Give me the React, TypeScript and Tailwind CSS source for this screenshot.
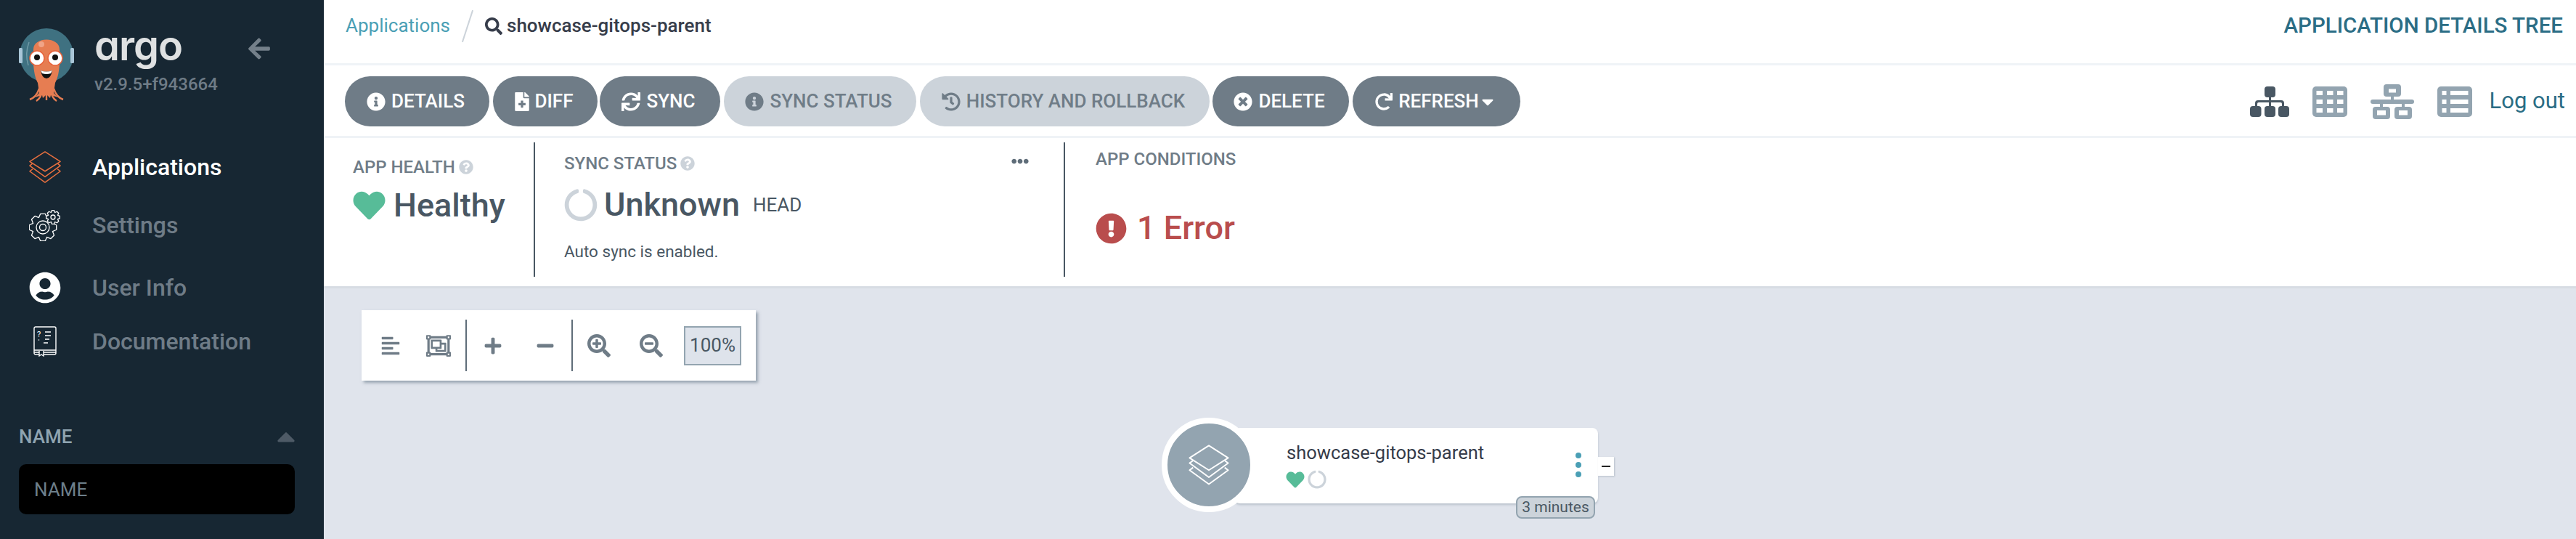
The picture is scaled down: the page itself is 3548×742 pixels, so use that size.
import type { ReactNode } from "react";
import {
  FaAlignLeft,
  FaArrowLeft,
  FaCaretDown,
  FaCaretUp,
  FaCircleNotch,
  FaEllipsisH,
  FaExclamationCircle,
  FaFileMedical,
  FaHeart,
  FaHistory,
  FaInfoCircle,
  FaMinus,
  FaPlus,
  FaQuestionCircle,
  FaRedo,
  FaRegObjectGroup,
  FaSearch,
  FaSearchMinus,
  FaSearchPlus,
  FaSync,
  FaTimesCircle,
  FaUserCircle,
} from "react-icons/fa";

function ArgoLogo() {
  return (
    <svg viewBox="0 0 80 102" className="h-[102px] w-[80px] shrink-0">
      <circle cx="38" cy="38" r="37" fill="#3f7181" />
      <path d="M14 20 Q8 36 13 52" fill="none" stroke="#6f9aa6" strokeWidth="1.5" />
      <rect x="0" y="28" width="5" height="21" rx="1.5" fill="#a9c6d8" />
      <rect x="71" y="28" width="5" height="21" rx="1.5" fill="#a9c6d8" />
      <path
        d="M20 30 C20 12 56 12 56 30 L56 50 C55 66 52 72 50 76 L48 90 L54 96 L44 93 L43 97 L38 92 L33 97 L32 93 L22 96 L28 90 L26 76 C24 72 21 66 20 50 Z"
        fill="#e67d52"
      />
      <path d="M15 99 Q24 96 28 84 M61 99 Q52 96 48 84 M24 101 Q31 97 33 84 M52 101 Q45 97 43 84 M38 84 L38 100" stroke="#e67d52" strokeWidth="2.4" fill="none" />
      <circle cx="31" cy="23" r="4" fill="#f0a487" />
      <circle cx="25" cy="42" r="10" fill="#fff" stroke="#e8623a" strokeWidth="1.5" />
      <circle cx="50" cy="42" r="10" fill="#fff" stroke="#e8623a" strokeWidth="1.5" />
      <circle cx="25" cy="41" r="4" fill="#111" />
      <circle cx="50" cy="41" r="4" fill="#111" />
      <path d="M30 59 Q38 62 46 59 Q44 70 38 70 Q32 70 30 59 Z" fill="#111" />
      <path d="M30 59 Q38 62 46 59 L44 63 Q38 65 32 63 Z" fill="#fff" />
    </svg>
  );
}

function LayersIcon({ className, stroke }: { className: string; stroke: string }) {
  return (
    <svg viewBox="0 0 48 48" fill="none" stroke={stroke} strokeWidth="1.6" strokeLinejoin="round" className={className}>
      <path d="M24 2 L46 16 L24 30 L2 16 Z" />
      <path d="M6 19 L2 22 L24 38 L46 22 L42 19" />
      <path d="M6 27 L2 30 L24 46 L46 30 L42 27" />
    </svg>
  );
}

function gearPath(cx: number, cy: number, outer: number, inner: number, teeth: number) {
  const points: string[] = [];
  for (let i = 0; i < teeth; i++) {
    const step = (Math.PI * 2) / teeth;
    const a = i * step;
    const pairs: [number, number][] = [
      [inner, a - step * 0.5],
      [outer, a - step * 0.22],
      [outer, a + step * 0.22],
    ];
    for (const [r, t] of pairs) {
      points.push(`${(cx + r * Math.cos(t)).toFixed(2)} ${(cy + r * Math.sin(t)).toFixed(2)}`);
    }
  }
  return `M${points.join(" L")} Z`;
}

function SettingsIcon() {
  return (
    <svg viewBox="0 0 44 44" fill="none" stroke="#fff" strokeWidth="1.3" strokeLinejoin="round" className="h-[44px] w-[44px]">
      <path d={gearPath(19, 25, 19, 14.5, 8)} />
      <circle cx="19" cy="25" r="9" />
      <circle cx="19" cy="25" r="4.5" />
      <path d={gearPath(33, 11, 9.5, 7, 8)} fill="#172733" />
      <circle cx="33" cy="11" r="3" />
    </svg>
  );
}

function DocsIcon() {
  return (
    <svg viewBox="0 0 32 42" fill="none" stroke="#fff" strokeWidth="1.4" className="h-[42px] w-[32px]">
      <rect x="1" y="1" width="30" height="38" rx="2" />
      <path d="M1 33 H31 M1 36 H31" />
      <path d="M8 34 V41 L11 39 L14 41 V34" fill="#172733" />
      <path d="M16 8 H24 M16 13 H24 M16 18 H22 M14 23 H20" />
      <text x="5" y="15" fill="#fff" stroke="none" fontSize="11" fontFamily="Roboto, sans-serif">?</text>
      <circle cx="7.5" cy="19" r="0.8" fill="#fff" stroke="none" />
    </svg>
  );
}

function TreeViewIcon() {
  return (
    <svg viewBox="0 0 54 42" className="h-[42px] w-[54px] fill-[#495763]">
      <rect x="20" y="0" width="15" height="15" rx="4" />
      <rect x="26" y="14" width="3" height="14" />
      <path d="M7 28 V23 Q7 19 11 19 H43 Q47 19 47 23 V28 H44 V24 Q44 22 42 22 H12 Q10 22 10 24 V28 Z" />
      <rect x="0" y="27" width="15.5" height="15" rx="4" />
      <rect x="20" y="27" width="15" height="15" rx="4" />
      <rect x="39" y="27" width="15" height="15" rx="4" />
    </svg>
  );
}

function GridViewIcon() {
  const cols = [5.5, 20, 34];
  const rows = [6, 18, 30];
  return (
    <svg viewBox="0 0 48 42" className="ml-[32px] h-[42px] w-[48px]">
      <rect width="48" height="42" rx="5" fill="#93a4b0" />
      {rows.map((y) => cols.map((x) => <rect key={`${x}-${y}`} x={x} y={y} width="8.5" height="6" fill="#fff" />))}
    </svg>
  );
}

function NetworkViewIcon() {
  return (
    <svg viewBox="0 0 60 48" className="ml-[32px] h-[48px] w-[60px] fill-[#93a4b0]">
      <path fillRule="evenodd" d="M22 0 H38 Q42 0 42 4 V13 Q42 17 38 17 H22 Q18 17 18 13 V4 Q18 0 22 0 Z M25 6.5 V11.5 H35 V6.5 Z" />
      <rect x="28" y="16" width="4" height="6" />
      <rect x="0" y="21" width="60" height="6" rx="3" />
      <rect x="13" y="26" width="4" height="6" />
      <rect x="43" y="26" width="4" height="6" />
      <path fillRule="evenodd" d="M7 31 H23 Q27 31 27 35 V44 Q27 48 23 48 H7 Q3 48 3 44 V35 Q3 31 7 31 Z M9 36 V42.5 H21 V36 Z" />
      <path fillRule="evenodd" d="M37 31 H53 Q57 31 57 35 V44 Q57 48 53 48 H37 Q33 48 33 44 V35 Q33 31 37 31 Z M39 36 V42.5 H51 V36 Z" />
    </svg>
  );
}

function ListViewIcon() {
  const rows = [6, 18, 30];
  return (
    <svg viewBox="0 0 48 42" className="ml-[32px] h-[42px] w-[48px]">
      <rect width="48" height="42" rx="5" fill="#93a4b0" />
      {rows.map((y) => (
        <g key={y} fill="#fff">
          <rect x="6.5" y={y} width="6" height="6" />
          <rect x="18" y={y} width="24.5" height="6" />
        </g>
      ))}
    </svg>
  );
}

function NavItem({ icon, label, active, className }: { icon: ReactNode; label: string; active?: boolean; className: string }) {
  return (
    <div className={`flex h-[50px] items-center ${className}`}>
      <div className="flex w-[127px] justify-center pr-[3px] pl-[0px]">{icon}</div>
      <span className={`text-[32px] font-medium ${active ? "text-white" : "text-[#6f7c87]"}`}>{label}</span>
    </div>
  );
}

function Sidebar() {
  return (
    <aside className="flex h-full w-[446px] shrink-0 flex-col bg-[#172733]">
      <div className="flex items-start pt-[38px] pl-[26px]">
        <ArgoLogo />
        <div className="ml-[24px] flex w-[180px] flex-col">
          <span className="mt-[-10px] h-[70px] font-['Inter'] text-[56px] leading-[70px] font-semibold tracking-[-1px] text-[#dfe1e2] [font-feature-settings:'cv11']">
            argo
          </span>
          <span className="mt-[3px] text-[24px] leading-[30px] font-medium whitespace-nowrap text-[#6f7c87]">v2.9.5+f943664</span>
        </div>
        <FaArrowLeft className="mt-[12px] ml-[30px] h-[34px] w-[34px] text-[#74808a]" />
      </div>
      <nav className="mt-[65px] flex flex-col">
        <NavItem icon={<LayersIcon className="h-[46px] w-[46px]" stroke="#e8703f" />} label="Applications" active className="" />
        <NavItem icon={<SettingsIcon />} label="Settings" className="mt-[30px]" />
        <NavItem icon={<FaUserCircle className="h-[44px] w-[44px] text-white" />} label="User Info" className="mt-[36px]" />
        <NavItem icon={<DocsIcon />} label="Documentation" className="mt-[24px]" />
      </nav>
      <div className="mt-[86px] flex items-center justify-between pr-[36px] pl-[26px]">
        <span className="text-[26px] leading-[32px] font-medium text-[#8fa4b1]">NAME</span>
        <FaCaretUp className="h-[40px] w-[32px] text-[#4e5a66]" />
      </div>
      <div className="mt-[18px] mr-[40px] ml-[26px]">
        <input
          placeholder="NAME"
          className="h-[69px] w-full rounded-[10px] bg-black px-[21px] text-[26px] text-white outline-none placeholder:text-[#6d7f8b]"
        />
      </div>
    </aside>
  );
}

function PillButton({ icon, label, disabled, className }: { icon: ReactNode; label: ReactNode; disabled?: boolean; className: string }) {
  return (
    <button
      className={`flex h-[69px] shrink-0 items-center justify-center gap-[8px] rounded-[35px] pr-[4px] text-[26px] font-medium ${
        disabled ? "bg-[#ccd3da] text-[#6f7c87]" : "bg-[#6f7c87] text-white"
      } ${className}`}
    >
      {icon}
      {label}
    </button>
  );
}

function Toolbar() {
  const iconClass = "h-[26px] w-[26px]";
  return (
    <div className="flex h-[100px] items-center justify-between border-b-[3px] border-[#eff3f7] pt-[2px] pr-[15px] pl-[29px]">
      <div className="flex">
        <PillButton icon={<FaInfoCircle className={iconClass} />} label="DETAILS" className="w-[199px]" />
        <PillButton icon={<FaFileMedical className="h-[26px] w-[20px]" />} label="DIFF" className="ml-[5px] w-[144px]" />
        <PillButton icon={<FaSync className={iconClass} />} label="SYNC" className="ml-[3px] w-[166px]" />
        <PillButton icon={<FaInfoCircle className={iconClass} />} label="SYNC STATUS" disabled className="ml-[5px] w-[265px]" />
        <PillButton icon={<FaHistory className={iconClass} />} label="HISTORY AND ROLLBACK" disabled className="ml-[5px] w-[399px]" />
        <PillButton icon={<FaTimesCircle className={iconClass} />} label="DELETE" className="ml-[4px] w-[188px]" />
        <PillButton
          icon={<FaRedo className="h-[24px] w-[24px]" />}
          label={
            <span className="flex items-center gap-[2px]">
              REFRESH <FaCaretDown className="h-[26px] w-[20px]" />
            </span>
          }
          className="ml-[5px] w-[231px]"
        />
      </div>
      <div className="flex items-center">
        <TreeViewIcon />
        <GridViewIcon />
        <NetworkViewIcon />
        <ListViewIcon />
        <span className="ml-[24px] text-[31px] text-[#2b6d85]">Log out</span>
      </div>
    </div>
  );
}

function StatusPanel() {
  return (
    <div className="relative flex h-[207px] items-start border-b-[3px] border-[#d7dce3] bg-white pt-[6px]">
      <div className="ml-[40px] flex w-[249px] flex-col">
        <div className="mt-[21px] flex items-center gap-[5px]">
          <span className="text-[24px] leading-[26px] font-medium text-[#6f7c87]">APP HEALTH</span>
          <FaQuestionCircle className="h-[20px] w-[20px] text-[#ccd3da]" />
        </div>
        <div className="mt-[12px] flex items-center gap-[11px]">
          <FaHeart className="h-[44px] w-[45px] text-[#57bc98]" />
          <span className="text-[45px] leading-[56px] font-medium text-[#495763]">Healthy</span>
        </div>
      </div>
      <div className="h-[185px] w-[2px] bg-[#495763]" />
      <div className="ml-[40px] flex w-[688px] flex-col">
        <div className="mt-[16px] flex items-center gap-[5px]">
          <span className="text-[24px] leading-[26px] font-medium text-[#6f7c87]">SYNC STATUS</span>
          <FaQuestionCircle className="h-[20px] w-[20px] text-[#ccd3da]" />
        </div>
        <div className="mt-[16px] flex items-center">
          <FaCircleNotch className="h-[46px] w-[46px] text-[#ccd3da]" />
          <span className="ml-[9px] text-[45px] leading-[56px] font-medium text-[#495763]">Unknown</span>
          <span className="ml-[18px] text-[26px] text-[#495763]">HEAD</span>
        </div>
        <span className="mt-[22px] text-[22.5px] leading-[28px] text-[#495763]">Auto sync is enabled.</span>
      </div>
      <FaEllipsisH className="absolute top-[20px] left-[947px] h-[24px] w-[24px] text-[#5f6d79]" />
      <div className="h-[185px] w-[2px] bg-[#495763]" />
      <div className="ml-[42px] flex flex-col">
        <span className="mt-[10px] text-[24px] leading-[26px] font-medium text-[#6f7c87]">APP CONDITIONS</span>
        <div className="mt-[54px] flex items-center gap-[14px]">
          <FaExclamationCircle className="h-[43px] w-[43px] text-[#b94d4d]" />
          <span className="text-[45px] leading-[56px] font-medium text-[#b94d4d]">1 Error</span>
        </div>
      </div>
    </div>
  );
}

function GraphControls() {
  const cell = "flex h-full items-center justify-center text-[#6f7c87]";
  return (
    <div className="absolute top-[30px] left-[52px] flex h-[97px] w-[543px] items-center bg-white pl-[4px] shadow-[3px_3px_4px_rgba(90,110,125,0.55)]">
      <div className={`${cell} w-[72px]`}><FaAlignLeft className="h-[28px] w-[28px]" /></div>
      <div className={`${cell} mr-[7px] w-[60px]`}><FaRegObjectGroup className="h-[34px] w-[36px]" /></div>
      <div className="h-[71px] w-[2px] bg-[#5f6d79]" />
      <div className={`${cell} w-[72px]`}><FaPlus className="h-[26px] w-[26px]" /></div>
      <div className={`${cell} w-[72px]`}><FaMinus className="h-[26px] w-[26px]" /></div>
      <div className="h-[71px] w-[2px] bg-[#5f6d79]" />
      <div className={`${cell} w-[72px]`}><FaSearchPlus className="h-[32px] w-[32px]" /></div>
      <div className={`${cell} w-[72px]`}><FaSearchMinus className="h-[32px] w-[32px]" /></div>
      <div className="ml-[9px] flex h-[54px] w-[79px] items-center justify-center border-2 border-[#93a4b0] bg-[#dee3eb] text-[26px] text-[#495763]">
        100%
      </div>
    </div>
  );
}

function AppNode() {
  return (
    <div className="absolute top-[178px] left-[1154px] h-[139px] w-[623px]">
      <div className="absolute top-[14px] left-[100px] h-[104px] w-[501px] rounded-[8px] bg-white shadow-[0_2px_3px_rgba(90,110,125,0.3)]">
        <div className="absolute top-[18px] left-[72px] text-[25.5px] leading-[32px] whitespace-nowrap text-[#363c4a]">showcase-gitops-parent</div>
        <div className="absolute top-[58px] left-[71px] flex items-center gap-[4px]">
          <FaHeart className="h-[25px] w-[26px] text-[#57bc98]" />
          <FaCircleNotch className="h-[26px] w-[26px] text-[#ccd3da]" />
        </div>
        <div className="absolute top-[34px] left-[470px] flex flex-col gap-[5px]">
          <div className="h-[8px] w-[8px] rounded-full bg-[#4a9fb5]" />
          <div className="h-[8px] w-[8px] rounded-full bg-[#4a9fb5]" />
          <div className="h-[8px] w-[8px] rounded-full bg-[#4a9fb5]" />
        </div>
      </div>
      <div className="absolute top-0 left-0 flex h-[130px] w-[130px] items-center justify-center rounded-full border-[8px] border-white bg-[#93a4b0]">
        <LayersIcon className="h-[58px] w-[58px]" stroke="#fff" />
      </div>
      <div className="absolute top-[54px] left-[601px] flex h-[26px] w-[22px] items-center justify-center bg-white shadow-[1px_1px_2px_rgba(90,110,125,0.3)]">
        <div className="h-[2px] w-[12px] bg-[#222]" />
      </div>
      <div className="absolute top-[108px] left-[488px] flex h-[31px] w-[109px] items-center justify-center rounded-[8px] border-2 border-[#93a4b0] bg-[#ccd3da] text-[21px] text-[#495763]">
        3 minutes
      </div>
    </div>
  );
}

export default function App() {
  return (
    <div className="flex h-[742px] w-[3548px] overflow-hidden bg-white font-['Roboto',sans-serif]">
      <Sidebar />
      <main className="flex min-w-0 flex-1 flex-col">
        <div className="flex h-[90px] items-center justify-between border-b-[3px] border-[#eff3f7] pr-[18px] pb-[16px] pl-[30px]">
          <div className="flex items-center">
            <span className="text-[26px] text-[#4a9fb5]">Applications</span>
            <div className="mx-[23px] h-[46px] w-[2px] rotate-[18deg] bg-[#ccd3da]" />
            <FaSearch className="h-[24px] w-[24px] text-[#363c4a]" />
            <span className="ml-[6px] text-[26px] font-medium text-[#363c4a]">showcase-gitops-parent</span>
          </div>
          <span className="text-[29.5px] font-medium text-[#2b6d85]">APPLICATION DETAILS TREE</span>
        </div>
        <Toolbar />
        <StatusPanel />
        <div className="relative flex-1 bg-[#e0e4ec]">
          <GraphControls />
          <AppNode />
        </div>
      </main>
    </div>
  );
}
